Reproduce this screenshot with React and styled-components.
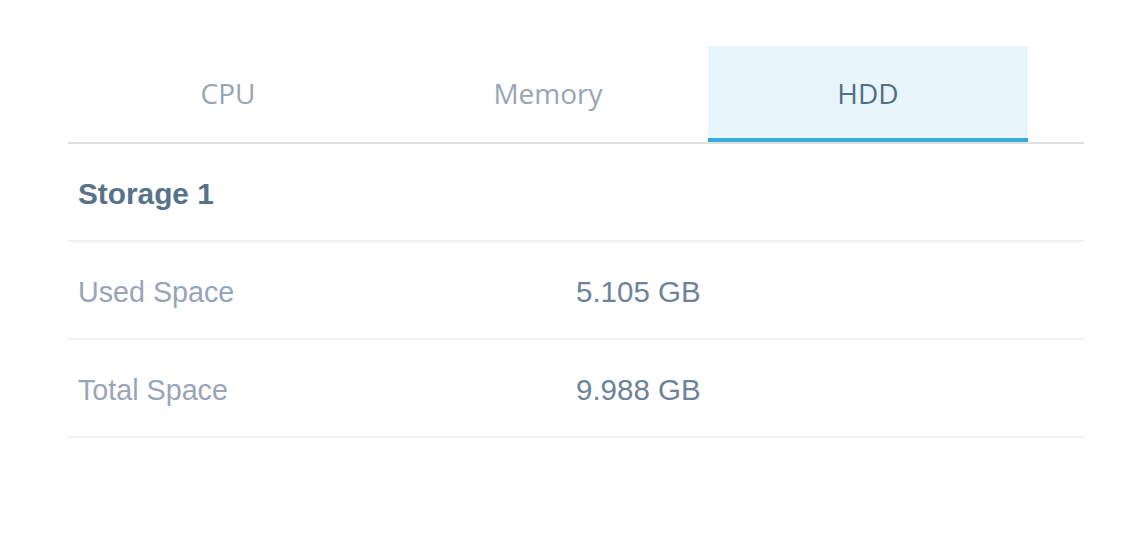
import styled, { createGlobalStyle } from "styled-components";

const GlobalStyle = createGlobalStyle`
  html, body {
    margin: 0;
    padding: 0;
    background: #ffffff;
  }
`;

const Panel = styled.div`
  width: 1016px;
  margin: 46px 0 0 68px;
`;

const TabBar = styled.div`
  display: flex;
  border-bottom: 2px solid #dedfe1;
`;

const Tab = styled.div`
  width: 320px;
  height: 90px;
  padding-top: 2px;
  display: flex;
  align-items: center;
  justify-content: center;
  font-family: "Open Sans", sans-serif;
  font-size: 28px;
  color: ${(p) => (p.$active ? "#546e87" : "#98a5b4")};
  background: ${(p) => (p.$active ? "#e8f5fa" : "transparent")};
  border-bottom: 4px solid ${(p) => (p.$active ? "#37acd6" : "transparent")};
`;

const Row = styled.div`
  display: grid;
  grid-template-columns: 1fr 1fr;
  align-items: center;
  height: 92px;
  padding-top: 4px;
  border-bottom: 2px solid #f0f0f0;
  font-family: "Liberation Sans", Arial, sans-serif;
  font-size: 28.7px;
`;

const Heading = styled.div`
  padding-left: 10px;
  font-size: 29.8px;
  font-weight: bold;
  color: #587389;
`;

const Label = styled.div`
  padding-left: 10px;
  color: #97a5b7;
`;

const Value = styled.div`
  font-size: 29.5px;
  color: #6d839b;
`;

const tabs = ["CPU", "Memory", "HDD"];
const rows = [
  { label: "Used Space", value: "5.105 GB" },
  { label: "Total Space", value: "9.988 GB" },
];

export default function App() {
  return (
    <>
      <GlobalStyle />
      <Panel>
        <TabBar>
          {tabs.map((t) => (
            <Tab key={t} $active={t === "HDD"}>
              {t}
            </Tab>
          ))}
        </TabBar>
        <Row>
          <Heading>Storage 1</Heading>
        </Row>
        {rows.map((r) => (
          <Row key={r.label}>
            <Label>{r.label}</Label>
            <Value>{r.value}</Value>
          </Row>
        ))}
      </Panel>
    </>
  );
}
